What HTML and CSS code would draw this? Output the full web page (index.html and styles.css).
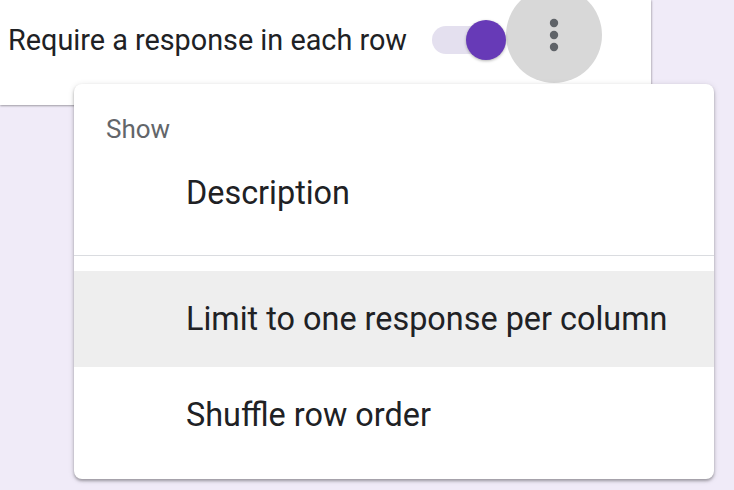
FILE: index.html
```html
<!DOCTYPE html>
<html>
<head>
<meta charset="utf-8">
<link rel="stylesheet" href="styles.css">
</head>
<body>
<div class="page">
  <div class="card">
    <span class="card-label">Require a response in each row</span>
    <div class="toggle">
      <span class="track"></span>
      <span class="thumb"></span>
    </div>
    <div class="more-btn">
      <svg width="10" height="34" viewBox="0 0 10 34">
        <circle cx="5" cy="5" r="4.2" fill="#5f6368"/>
        <circle cx="5" cy="17" r="4.2" fill="#5f6368"/>
        <circle cx="5" cy="29" r="4.2" fill="#5f6368"/>
      </svg>
    </div>
  </div>
  <div class="menu">
    <div class="menu-header">Show</div>
    <div class="menu-item">Description</div>
    <div class="menu-sep"></div>
    <div class="menu-item active">Limit to one response per column</div>
    <div class="menu-item">Shuffle row order</div>
  </div>
</div>
</body>
</html>
```
FILE: styles.css
```css
html, body {
  margin: 0;
  padding: 0;
}
body {
  background: #f0ebf8;
  font-family: Roboto, "Liberation Sans", sans-serif;
  color: #202124;
  width: 734px;
  height: 490px;
  overflow: hidden;
}
.page {
  position: relative;
  width: 734px;
  height: 490px;
}
.card {
  width: 651px;
  height: 105px;
  background: #fff;
  box-shadow: 0 1px 2px rgba(0,0,0,0.3), 1px 0 2px rgba(0,0,0,0.12);
  display: flex;
  align-items: center;
  padding-left: 8px;
  box-sizing: border-box;
  padding-bottom: 26px;
  padding-top: 0;
}
.card-label {
  font-size: 28.8px;
  line-height: 36px;
  letter-spacing: 0;
  white-space: nowrap;
}
.toggle {
  position: relative;
  width: 74px;
  height: 40px;
  margin-left: 25px;
  display: flex;
  align-items: center;
  flex-shrink: 0;
}
.track {
  width: 68px;
  height: 28px;
  border-radius: 14px;
  background: #e4e0ef;
}
.thumb {
  position: absolute;
  left: 34px;
  top: 0;
  width: 40px;
  height: 40px;
  border-radius: 50%;
  background: #673ab7;
  box-shadow: 0 1px 3px rgba(0,0,0,0.3);
}
.more-btn {
  width: 96px;
  height: 96px;
  border-radius: 50%;
  background: #d8d8d8;
  display: flex;
  align-items: center;
  justify-content: center;
  align-self: flex-start;
  margin-top: -13px;
  flex-shrink: 0;
}
.menu {
  position: absolute;
  left: 74px;
  top: 84px;
  width: 640px;
  height: 395px;
  background: #fff;
  border-radius: 8px;
  box-shadow: 0 2px 3px rgba(0,0,0,0.3), 0 1px 6px rgba(0,0,0,0.12);
  box-sizing: border-box;
  padding-bottom: 16px;
}
.menu-header {
  padding: 29px 0 0 32px;
  height: 61px;
  box-sizing: border-box;
  font-size: 26px;
  line-height: 32px;
  color: #63666a;
}
.menu-item {
  height: 96px;
  display: flex;
  align-items: center;
  padding-left: 112px;
  font-size: 32.4px;
  white-space: nowrap;
}
.menu-item.active {
  background: #eeeeee;
}
.menu-sep {
  height: 30px;
  position: relative;
}
.menu-sep::after {
  content: "";
  position: absolute;
  left: 0;
  right: 0;
  top: 14px;
  height: 1px;
  background: #dadce0;
}
```
